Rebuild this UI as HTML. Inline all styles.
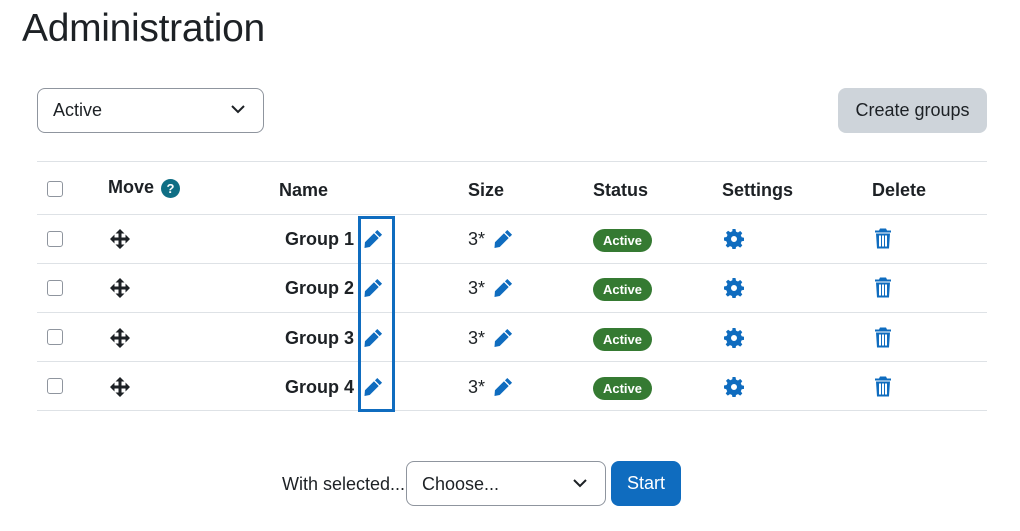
<!DOCTYPE html>
<html><head><style>
body{margin:0;width:1020px;height:531px;background:#fff;font-family:"Liberation Sans",sans-serif;color:#1d2125;position:relative;overflow:hidden}
.a{position:absolute}
h1{position:absolute;left:22px;top:7px;margin:0;font-weight:400;font-size:39px;letter-spacing:-0.3px}
.sel{position:absolute;border:1px solid #8f959e;border-radius:8px;background:#fff;font-size:18px;box-sizing:border-box}
.hr{position:absolute;left:37px;width:950px;height:1px;background:#dee2e6}
.cb{position:absolute;left:47px;width:16px;height:16px;border:1px solid #8f959e;border-radius:3px;box-sizing:border-box}
.th{position:absolute;font-weight:700;font-size:18px}
.g{position:absolute;font-weight:700;font-size:18px}
.badge{position:absolute;left:593px;width:59px;height:23px;background:#357a32;color:#fff;border-radius:12px;font-size:13px;font-weight:700;text-align:center;line-height:23px}
.sz{position:absolute;left:468px;font-size:18px}
</style></head><body>
<h1>Administration</h1>
<div class="sel" style="left:37px;top:88px;width:227px;height:45px;padding:11px 15px">Active
<svg class="a" style="right:18px;top:16px" width="14" height="9" viewBox="0 0 14 9"><path d="M1 1l6 6 6-6" fill="none" stroke="#1d2125" stroke-width="2"/></svg></div>
<div class="a" style="left:838px;top:88px;width:149px;height:45px;background:#ced4da;border-radius:8px;font-size:18px;line-height:45px;text-align:center">Create groups</div>
<div class="hr" style="top:161px"></div>
<div class="hr" style="top:214px"></div>
<div class="hr" style="top:263px"></div>
<div class="hr" style="top:312px"></div>
<div class="hr" style="top:361px"></div>
<div class="hr" style="top:410px"></div>
<div class="cb" style="top:181px"></div>
<div class="th" style="left:108px;top:177px">Move</div>
<div class="a" style="left:161px;top:179px;width:19px;height:19px;border-radius:50%;background:#0f6e84;color:#fff;font-size:13px;font-weight:700;text-align:center;line-height:19px">?</div>
<div class="th" style="left:279px;top:180px">Name</div>
<div class="th" style="left:468px;top:180px">Size</div>
<div class="th" style="left:593px;top:180px">Status</div>
<div class="th" style="left:722px;top:180px">Settings</div>
<div class="th" style="left:872px;top:180px">Delete</div>
<div class="a" style="left:358px;top:216px;width:31px;height:190px;border:3px solid #0f6cbf"></div>
<svg width="0" height="0" style="position:absolute"><defs>
<symbol id="pen" viewBox="0 0 20 20"><path d="M14 1l5 5-2.5 2.5-5-5zM10.5 4.5l5 5L6 19 0.5 20 1 14z" fill="#0f6cbf"/></symbol>
<symbol id="move" viewBox="0 0 20 20"><path d="M10 0l4.5 4.5h-3v4h4v-3L20 10l-4.5 4.5v-3h-4v4h3L10 20l-4.5-4.5h3v-4h-4v3L0 10l4.5-4.5v3h4v-4h-3z" fill="#1d2125"/></symbol>
<symbol id="gear" viewBox="0 0 20 20"><path d="M8.5 0h3l.5 2.6 2 .9 2.2-1.5 2.1 2.1-1.5 2.2.9 2 2.6.5v3l-2.6.5-.9 2 1.5 2.2-2.1 2.1-2.2-1.5-2 .9-.5 2.6h-3l-.5-2.6-2-.9-2.2 1.5-2.1-2.1 1.5-2.2-.9-2L0 11.5v-3l2.6-.5.9-2L2 3.8 4.1 1.7l2.2 1.5 2-.9zM10 7a3 3 0 100 6 3 3 0 000-6z" fill="#0f6cbf" fill-rule="evenodd"/></symbol>
<symbol id="bin" viewBox="0 0 16 20"><path d="M5 0h6l1 2h4v2H0V2h4zM1 5h14l-1 15H2zM4 7v11h2V7zm3 0v11h2V7zm3 0v11h2V7z" fill="#0f6cbf" fill-rule="evenodd"/></symbol>
</defs></svg>
<div class="cb" style="top:231px"></div><svg class="a" style="left:110px;top:229px" width="20" height="20"><use href="#move"/></svg>
<div class="g" style="left:285px;top:229px">Group 1</div><svg class="a" style="left:364px;top:229px" width="19" height="19"><use href="#pen"/></svg>
<div class="sz" style="top:229px">3*</div><svg class="a" style="left:494px;top:229px" width="19" height="19"><use href="#pen"/></svg>
<div class="badge" style="top:229px">Active</div><svg class="a" style="left:724px;top:229px" width="20" height="20"><use href="#gear"/></svg><svg class="a" style="left:875px;top:228px" width="16" height="21"><use href="#bin"/></svg>

<div class="cb" style="top:280px"></div><svg class="a" style="left:110px;top:278px" width="20" height="20"><use href="#move"/></svg>
<div class="g" style="left:285px;top:278px">Group 2</div><svg class="a" style="left:364px;top:278px" width="19" height="19"><use href="#pen"/></svg>
<div class="sz" style="top:278px">3*</div><svg class="a" style="left:494px;top:278px" width="19" height="19"><use href="#pen"/></svg>
<div class="badge" style="top:278px">Active</div><svg class="a" style="left:724px;top:278px" width="20" height="20"><use href="#gear"/></svg><svg class="a" style="left:875px;top:277px" width="16" height="21"><use href="#bin"/></svg>

<div class="cb" style="top:329px"></div><svg class="a" style="left:110px;top:328px" width="20" height="20"><use href="#move"/></svg>
<div class="g" style="left:285px;top:328px">Group 3</div><svg class="a" style="left:364px;top:328px" width="19" height="19"><use href="#pen"/></svg>
<div class="sz" style="top:328px">3*</div><svg class="a" style="left:494px;top:328px" width="19" height="19"><use href="#pen"/></svg>
<div class="badge" style="top:328px">Active</div><svg class="a" style="left:724px;top:328px" width="20" height="20"><use href="#gear"/></svg><svg class="a" style="left:875px;top:327px" width="16" height="21"><use href="#bin"/></svg>

<div class="cb" style="top:378px"></div><svg class="a" style="left:110px;top:377px" width="20" height="20"><use href="#move"/></svg>
<div class="g" style="left:285px;top:377px">Group 4</div><svg class="a" style="left:364px;top:377px" width="19" height="19"><use href="#pen"/></svg>
<div class="sz" style="top:377px">3*</div><svg class="a" style="left:494px;top:377px" width="19" height="19"><use href="#pen"/></svg>
<div class="badge" style="top:377px">Active</div><svg class="a" style="left:724px;top:377px" width="20" height="20"><use href="#gear"/></svg><svg class="a" style="left:875px;top:376px" width="16" height="21"><use href="#bin"/></svg>

<div class="a" style="left:282px;top:474px;font-size:18px">With selected...</div>
<div class="sel" style="left:406px;top:461px;width:200px;height:45px;padding:12px 15px">Choose...
<svg class="a" style="right:18px;top:17px" width="14" height="9" viewBox="0 0 14 9"><path d="M1 1l6 6 6-6" fill="none" stroke="#1d2125" stroke-width="2"/></svg></div>
<div class="a" style="left:611px;top:461px;width:70px;height:45px;background:#0f6cbf;color:#fff;border-radius:8px;font-size:18px;line-height:45px;text-align:center">Start</div>
</body></html>
